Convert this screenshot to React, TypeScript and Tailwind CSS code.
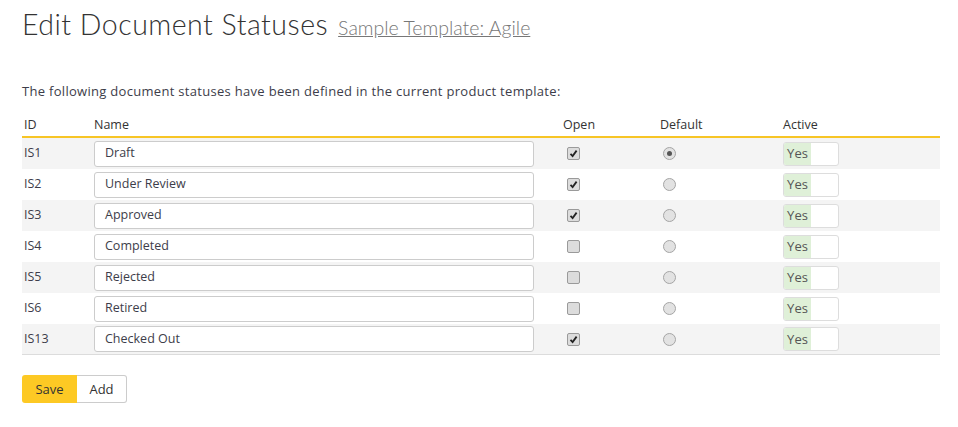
import React from 'react';

const STATUSES = [
  { id: 'IS1', name: 'Draft', open: true, isDefault: true },
  { id: 'IS2', name: 'Under Review', open: true, isDefault: false },
  { id: 'IS3', name: 'Approved', open: true, isDefault: false },
  { id: 'IS4', name: 'Completed', open: false, isDefault: false },
  { id: 'IS5', name: 'Rejected', open: false, isDefault: false },
  { id: 'IS6', name: 'Retired', open: false, isDefault: false },
  { id: 'IS13', name: 'Checked Out', open: true, isDefault: false },
];

function Checkbox({ checked }: { checked: boolean }) {
  return (
    <span className="flex h-[13px] w-[13px] items-center justify-center rounded-[2px] border border-[#9a9a9a] bg-[#dcdcdc]">
      {checked && (
        <svg width="9" height="9" viewBox="0 0 9 9">
          <path d="M1.5 4.8 L3.6 7 L7.6 1.6" fill="none" stroke="#222" strokeWidth="1.8" />
        </svg>
      )}
    </span>
  );
}

function Radio({ checked }: { checked: boolean }) {
  return (
    <span className="flex h-[13px] w-[13px] items-center justify-center rounded-full border border-[#a5a5a5] bg-[#e2e2e2]">
      {checked && <span className="h-[5px] w-[5px] rounded-full bg-[#555]" />}
    </span>
  );
}

export default function App() {
  return (
    <div className="min-h-[427px] bg-white px-[22px] pt-[3px] text-[13px] text-[#3d3d4a]" style={{ fontFamily: '"Open Sans", sans-serif' }}>
      <div className="flex items-baseline gap-[10px]">
        <h1 className="text-[28.5px] font-light tracking-[0.5px] text-[#333]" style={{ fontFamily: 'Lato, sans-serif' }}>
          Edit Document Statuses
        </h1>
        <a className="text-[19.5px] font-light text-[#777] underline" style={{ fontFamily: 'Lato, sans-serif' }}>
          Sample Template: Agile
        </a>
      </div>

      <p className="mt-[36px] text-[13px] tracking-[0.3px]">The following document statuses have been defined in the current product template:</p>

      <div className="mt-[13px] w-[918px]">
        <div className="flex h-[24px] items-center border-b-2 border-[#f7c526] text-[12.5px] text-[#333]">
          <div className="w-[72px] pl-[2px]">ID</div>
          <div className="w-[469px]">Name</div>
          <div className="w-[97px]">Open</div>
          <div className="w-[123px]">Default</div>
          <div>Active</div>
        </div>
        {STATUSES.map((s, i) => (
          <div
            key={s.id}
            className={`flex h-[31px] items-center ${i % 2 === 0 ? 'bg-[#f4f4f4]' : 'bg-white'} ${i === STATUSES.length - 1 ? 'border-b border-[#dcdcdc]' : ''}`}
          >
            <div className="w-[72px] pl-[2px] text-[12.5px]">{s.id}</div>
            <div className="w-[469px]">
              <div className="flex h-[26px] w-[440px] items-center rounded-[3px] border border-[#cccccc] bg-white pl-[10px] text-[12.5px]">
                {s.name}
              </div>
            </div>
            <div className="w-[97px] pl-[4px]">
              <Checkbox checked={s.open} />
            </div>
            <div className="w-[123px] pl-[3px]">
              <Radio checked={s.isDefault} />
            </div>
            <div className="flex h-[24px] w-[56px] overflow-hidden rounded-[3px] border border-[#dddddd] bg-white">
              <div className="flex w-[27px] items-center justify-center bg-[#dff0d8] text-[13px] text-[#555]">Yes</div>
            </div>
          </div>
        ))}
      </div>

      <div className="mt-[20px] flex h-[28px] text-[13px]">
        <button className="w-[55px] rounded-l-[3px] bg-[#fdc924] text-[#333]">Save</button>
        <button className="w-[50px] rounded-r-[3px] border border-l-0 border-[#cccccc] bg-white text-[#333]">Add</button>
      </div>
    </div>
  );
}
